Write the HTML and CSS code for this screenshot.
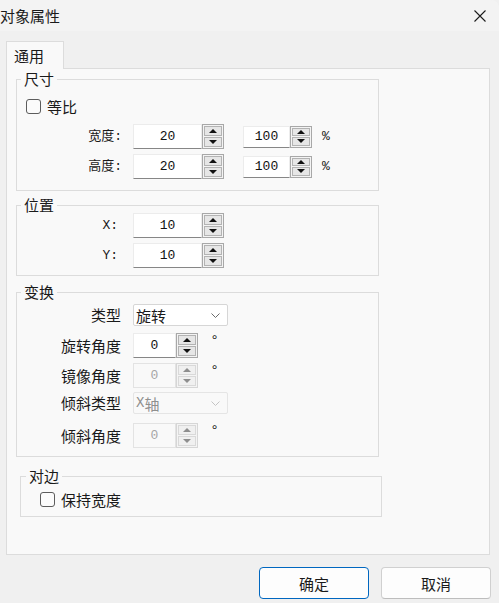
FILE: index.html
```html
<!DOCTYPE html>
<html lang="zh-CN">
<head>
  <meta charset="UTF-8" />
  <title>对象属性</title>
  <link rel="stylesheet" href="styles.css">
</head>
<body>
  <div class="dialog" role="dialog" aria-label="对象属性">
    <div class="titlebar">
      <span class="title">对象属性</span>
      <button class="close" aria-label="关闭">
        <svg width="12" height="12" viewBox="0 0 12 12"><path d="M0.5 0.5L11.5 11.5M11.5 0.5L0.5 11.5" stroke="#1b1b1b" stroke-width="1.1" fill="none"/></svg>
      </button>
    </div>

    <div class="content">
      <div class="tabs">
        <div class="tab">通用</div>
      </div>
      <div class="panel">

        <fieldset class="group g-size">
          <legend>尺寸</legend>
          <label class="check check-ratio"><span class="box"></span>等比</label>
          <div class="rows">
            <div class="row">
              <span class="lbl lbl-mono">宽度:</span>
              <input class="num w69" value="20" readonly>
              <div class="spin"><span class="up"></span><span class="down"></span></div>
              <input class="num w47 short" value="100" readonly>
              <div class="spin short"><span class="up"></span><span class="down"></span></div>
              <span class="unit">%</span>
            </div>
            <div class="row">
              <span class="lbl lbl-mono">高度:</span>
              <input class="num w69" value="20" readonly>
              <div class="spin"><span class="up"></span><span class="down"></span></div>
              <input class="num w47 short" value="100" readonly>
              <div class="spin short"><span class="up"></span><span class="down"></span></div>
              <span class="unit">%</span>
            </div>
          </div>
        </fieldset>

        <fieldset class="group g-pos">
          <legend>位置</legend>
          <div class="rows">
            <div class="row">
              <span class="lbl lbl-mono lbl-xy">X:</span>
              <input class="num w69" value="10" readonly>
              <div class="spin"><span class="up"></span><span class="down"></span></div>
            </div>
            <div class="row">
              <span class="lbl lbl-mono lbl-xy">Y:</span>
              <input class="num w69" value="10" readonly>
              <div class="spin"><span class="up"></span><span class="down"></span></div>
            </div>
          </div>
        </fieldset>

        <fieldset class="group g-xform">
          <legend>变换</legend>
          <div class="row row-combo">
            <span class="lbl">类型</span>
            <div class="combo">旋转
              <svg width="9" height="5" viewBox="0 0 9 5"><path d="M0.5 0.5L4.5 4.5L8.5 0.5" stroke="#6b6b6b" fill="none"/></svg>
            </div>
          </div>
          <div class="row row-rotate">
            <span class="lbl">旋转角度</span>
            <input class="num w43" value="0" readonly>
            <div class="spin"><span class="up"></span><span class="down"></span></div>
            <span class="deg">°</span>
          </div>
          <div class="row row-mirror">
            <span class="lbl">镜像角度</span>
            <input class="num w43" value="0" disabled>
            <div class="spin off"><span class="up"></span><span class="down"></span></div>
            <span class="deg">°</span>
          </div>
          <div class="row row-combo row-skewtype">
            <span class="lbl">倾斜类型</span>
            <div class="combo off"><span class="mono">X</span>轴
              <svg width="9" height="5" viewBox="0 0 9 5"><path d="M0.5 0.5L4.5 4.5L8.5 0.5" stroke="#c4c4c4" fill="none"/></svg>
            </div>
          </div>
          <div class="row row-skew">
            <span class="lbl">倾斜角度</span>
            <input class="num w43" value="0" disabled>
            <div class="spin off"><span class="up"></span><span class="down"></span></div>
            <span class="deg">°</span>
          </div>
        </fieldset>

        <fieldset class="group g-edge">
          <legend>对边</legend>
          <label class="check check-keep"><span class="box"></span>保持宽度</label>
        </fieldset>

      </div>
    </div>

    <div class="footer">
      <button class="btn btn-default">确定</button>
      <button class="btn">取消</button>
    </div>
  </div>
</body>
</html>
```

FILE: styles.css
```css
*, *::before, *::after { box-sizing: border-box; }
html, body { margin: 0; }
body {
  width: 499px;
  height: 603px;
  overflow: hidden;
  background: #f0f0f0;
  font-family: "Noto Sans CJK SC", "Noto Sans", sans-serif;
  font-size: 14px;
  color: #1a1a1a;
}
.titlebar {
  height: 31px;
  background: #f3f3f3;
  display: flex;
  align-items: center;
  justify-content: space-between;
  border-top-right-radius: 8px;
}
.title {
  font-size: 15px;
  line-height: 16px;
}
.close {
  border: none;
  background: none;
  padding: 0;
  margin-right: 13px;
  width: 12px;
  height: 12px;
  display: flex;
}
.content {
  padding: 10px 9px 0 6px;
}
.tabs {
  display: flex;
}
.tab {
  position: relative;
  z-index: 1;
  width: 58px;
  height: 28px;
  margin-bottom: -1px;
  padding-left: 7px;
  display: flex;
  align-items: center;
  font-size: 15px;
  background: #f9f9f9;
  border: 1px solid #dcdcdc;
  border-bottom: none;
}
.panel {
  height: 487px;
  padding: 2px 0 0 9px;
  background: #f9f9f9;
  border: 1px solid #dcdcdc;
}

/* group boxes */
.group {
  margin: 0;
  padding: 0;
  min-width: 0;
  width: 363px;
  border: 1px solid #dcdcdc;
}
.group legend {
  font-size: 15px;
  line-height: 16px;
  padding: 0 3px;
  margin-left: 4px;
}
.g-size { padding-bottom: 11px; }
.g-pos { margin-top: 6px; padding-bottom: 7px; }
.g-xform { margin-top: 8px; padding-bottom: 8px; }
.g-edge {
  margin-top: 11px;
  margin-left: 4px;
  width: 362px;
  padding-bottom: 6px;
}
.g-edge legend { margin-left: 5px; }

.rows {
  display: flex;
  flex-direction: column;
  gap: 5px;
}
.g-size .rows { margin-top: 7px; }
.row {
  display: flex;
  align-items: center;
  height: 25px;
}
.lbl {
  width: 116px;
  padding-right: 12px;
  text-align: right;
  font-size: 15px;
  line-height: 16px;
  flex-shrink: 0;
}
.lbl-mono {
  font-family: "Liberation Mono", "Noto Sans CJK SC", monospace;
  font-size: 13px;
  padding-right: 11px;
}
.lbl-xy { padding-right: 15px; }

/* checkbox */
.check {
  display: flex;
  align-items: center;
  height: 22px;
  font-size: 15px;
}
.check .box {
  width: 15px;
  height: 15px;
  margin-right: 6px;
  border: 1px solid #5c5c5c;
  border-radius: 3px;
  background: #fbfbfb;
}
.check-ratio { margin: 8px 0 0 9px; }
.check-keep { margin: 4px 0 0 19px; }

/* number fields */
.num {
  height: 25px;
  margin: 0;
  padding: 0;
  font-family: "Liberation Mono", monospace;
  font-size: 13px;
  text-align: center;
  color: #111;
  background: #fff;
  border: 1px solid #ececec;
  border-bottom-color: #868686;
  border-radius: 0;
  outline: none;
}
.num:disabled {
  color: #a6a6a6;
  background: #f9f9f9;
  border-color: #e3e3e3;
}
.num.short { height: 22px; }
.w69 { width: 69px; }
.w47 { width: 47px; margin-left: 19px; }
.w43 { width: 43px; }

.spin {
  width: 22px;
  height: 25px;
  display: flex;
  flex-direction: column;
  gap: 1px;
  padding: 1px;
  border: 1px solid #a8a8a8;
  background: #f4f4f4;
}
.spin.short { height: 22px; }
.spin span {
  flex: 1;
  display: flex;
  align-items: center;
  justify-content: center;
  background: #e6e6e6;
  border: 1px solid #b3b3b3;
}
.spin .up::after,
.spin .down::after {
  content: "";
  border-left: 4px solid transparent;
  border-right: 4px solid transparent;
}
.spin .up::after { border-bottom: 4px solid #111; }
.spin .down::after { border-top: 4px solid #111; }
.spin.off { border-color: #d6d6d6; }
.spin.off span { background: #f0f0f0; border-color: #d9d9d9; }
.spin.off .up::after { border-bottom-color: #8e8e8e; }
.spin.off .down::after { border-top-color: #8e8e8e; }

.unit {
  margin-left: 10px;
  font-family: "Liberation Mono", monospace;
  font-size: 13px;
}
.deg {
  align-self: flex-start;
  margin-left: 14px;
  font-size: 14px;
  line-height: 14px;
}

/* combo boxes */
.row-combo { height: 22px; }
.g-xform .row-combo { margin-top: 4px; }
.g-xform .row-rotate { margin-top: 7px; }
.g-xform .row-mirror { margin-top: 5px; }
.g-xform .row-skewtype { margin-top: 4px; }
.g-xform .row-skew { margin-top: 9px; }
.combo {
  width: 95px;
  height: 22px;
  display: flex;
  align-items: center;
  padding: 0 7px 0 2px;
  font-size: 15px;
  background: #fff;
  border: 1px solid #d6d6d6;
  border-radius: 2px;
}
.combo svg { margin-left: auto; }
.combo.off {
  color: #8f8f8f;
  background: #f9f9f9;
  border-color: #e5e5e5;
}
.mono { font-family: "Liberation Mono", monospace; font-size: 14px; }

/* buttons */
.footer {
  display: flex;
  justify-content: flex-end;
  gap: 12px;
  margin-top: 12px;
  padding-right: 8px;
}
.btn {
  width: 110px;
  height: 32px;
  font-family: inherit;
  font-size: 15px;
  color: #1a1a1a;
  background: #fdfdfd;
  border: 1px solid #d0d0d0;
  border-bottom-color: #bdbdbd;
  border-radius: 4px;
}
.btn-default {
  border: 1px solid #0067c0;
}
```
